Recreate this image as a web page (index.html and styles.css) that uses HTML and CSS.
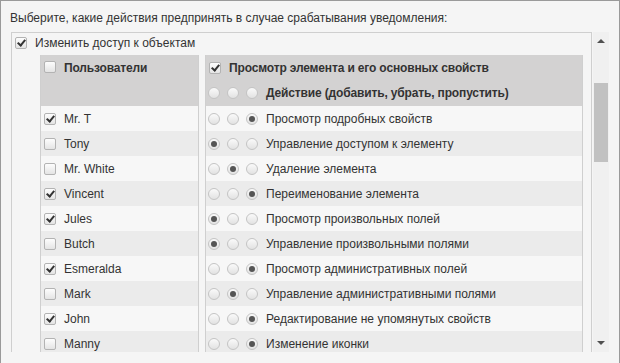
FILE: index.html
```html
<!DOCTYPE html>
<html>
<head>
    <meta charset="utf-8">
    <title>Действия при уведомлении</title>
    <link rel="stylesheet" href="styles.css">
</head>
<body>
<div class="panel">
    <p class="prompt">Выберите, какие действия предпринять в случае срабатывания уведомления:</p>
    <div class="scroll-area">
        <div class="box">
            <label class="top-option"><span class="cb on"></span>Изменить доступ к объектам</label>
            <div class="matrix">
                <ul class="users">
                    <li class="head"><span class="cb"></span>Пользователи</li>
                    <li><span class="cb on"></span>Mr. T</li>
                    <li class="alt"><span class="cb"></span>Tony</li>
                    <li><span class="cb"></span>Mr. White</li>
                    <li class="alt"><span class="cb on"></span>Vincent</li>
                    <li><span class="cb on"></span>Jules</li>
                    <li class="alt"><span class="cb"></span>Butch</li>
                    <li><span class="cb on"></span>Esmeralda</li>
                    <li class="alt"><span class="cb"></span>Mark</li>
                    <li><span class="cb on"></span>John</li>
                    <li class="alt"><span class="cb"></span>Manny</li>
                </ul>
                <ul class="actions">
                    <li class="head">
                        <div class="head-line"><span class="cb on"></span>Просмотр элемента и его основных свойств</div>
                        <div class="head-line"><span class="rb"></span><span class="rb"></span><span class="rb"></span>Действие (добавить, убрать, пропустить)</div>
                    </li>
                    <li><span class="rb"></span><span class="rb"></span><span class="rb on"></span>Просмотр подробных свойств</li>
                    <li class="alt"><span class="rb on"></span><span class="rb"></span><span class="rb"></span>Управление доступом к элементу</li>
                    <li><span class="rb"></span><span class="rb on"></span><span class="rb"></span>Удаление элемента</li>
                    <li class="alt"><span class="rb"></span><span class="rb"></span><span class="rb on"></span>Переименование элемента</li>
                    <li><span class="rb on"></span><span class="rb"></span><span class="rb"></span>Просмотр произвольных полей</li>
                    <li class="alt"><span class="rb on"></span><span class="rb"></span><span class="rb"></span>Управление произвольными полями</li>
                    <li><span class="rb"></span><span class="rb"></span><span class="rb on"></span>Просмотр административных полей</li>
                    <li class="alt"><span class="rb"></span><span class="rb on"></span><span class="rb"></span>Управление административными полями</li>
                    <li><span class="rb"></span><span class="rb"></span><span class="rb on"></span>Редактирование не упомянутых свойств</li>
                    <li class="alt"><span class="rb"></span><span class="rb"></span><span class="rb on"></span>Изменение иконки</li>
                </ul>
            </div>
        </div>
        <div class="scrollbar">
            <span class="arrow up"></span>
            <span class="thumb"></span>
            <span class="arrow down"></span>
        </div>
    </div>
</div>
</body>
</html>
```

FILE: styles.css
```css
body {
    margin: 0;
    font-family: "Liberation Sans", Arial, sans-serif;
    font-size: 12px;
    color: #333;
    background: #f5f5f5;
}
.panel {
    box-sizing: border-box;
    width: 620px;
    height: 363px;
    border: 1px solid #9a9a9a;
    border-bottom: none;
    background: #f5f5f5;
    overflow: hidden;
}
.prompt {
    margin: 0;
    padding: 9px 0 0 9px;
    height: 22px;
    line-height: 16px;
}
.scroll-area {
    display: flex;
    margin-left: 10px;
    height: 320px;
}
.box {
    box-sizing: border-box;
    width: 581px;
    border: 1px solid #cfcfcf;
    border-bottom: none;
    overflow: hidden;
}
.top-option {
    display: flex;
    align-items: center;
    height: 20px;
    padding-left: 3px;
    margin-bottom: 2px;
}
.top-option .cb {
    margin-right: 8px;
}
.matrix {
    display: flex;
    gap: 6px;
    padding-left: 28px;
}
ul {
    margin: 0;
    padding: 0;
    list-style-type: none;
    border-left: 1px solid #cfcfcf;
    border-right: 1px solid #cfcfcf;
}
li {
    display: flex;
    align-items: center;
    height: 25px;
    background: #f7f7f7;
}
li.alt {
    background: #ebebeb;
}
li.head {
    height: 51px;
    background: #d3d2d2;
    font-weight: bold;
    letter-spacing: -0.15px;
    align-items: flex-start;
}
.users {
    width: 157px;
}
.users li {
    padding-left: 3px;
}
.users .cb {
    margin-right: 8px;
}
.users li.head {
    padding-top: 6px;
    box-sizing: border-box;
}
.actions {
    width: 376px;
}
.actions li {
    padding-left: 2px;
}
.actions li.head {
    flex-direction: column;
}
.head-line {
    display: flex;
    align-items: center;
    height: 25px;
}
.head-line .cb {
    margin: 0 8px 0 1px;
}
.actions .rb {
    margin-right: 7px;
}
.actions .rb + .rb + .rb {
    margin-right: 8px;
}

.cb {
    position: relative;
    display: inline-block;
    box-sizing: border-box;
    width: 12px;
    height: 12px;
    border: 1px solid #b3b3b3;
    border-radius: 2px;
    background: linear-gradient(#fdfdfd, #e4e4e4);
    flex: none;
}
.cb.on::after {
    content: "";
    position: absolute;
    left: 3px;
    top: 0px;
    width: 3px;
    height: 6px;
    border: solid #333;
    border-width: 0 2px 2px 0;
    transform: rotate(40deg);
}
.rb {
    position: relative;
    display: inline-block;
    box-sizing: border-box;
    width: 12px;
    height: 12px;
    border: 1px solid #c4c4c4;
    border-radius: 50%;
    background: linear-gradient(#fafafa, #e2e2e2);
    flex: none;
}
.rb.on::after {
    content: "";
    position: absolute;
    left: 2px;
    top: 2px;
    width: 6px;
    height: 6px;
    border-radius: 50%;
    background: #555;
}

.scrollbar {
    position: relative;
    width: 16px;
    height: 320px;
    margin-left: 1px;
    background: #f0f0f0;
}
.thumb {
    position: absolute;
    left: 1px;
    top: 51px;
    width: 14px;
    height: 79px;
    background: #c1c1c1;
}
.arrow {
    position: absolute;
    left: 4px;
    width: 0;
    height: 0;
    border-left: 4px solid transparent;
    border-right: 4px solid transparent;
}
.arrow.up {
    top: 7px;
    border-bottom: 4px solid #505050;
}
.arrow.down {
    top: 309px;
    border-top: 4px solid #505050;
}
```
